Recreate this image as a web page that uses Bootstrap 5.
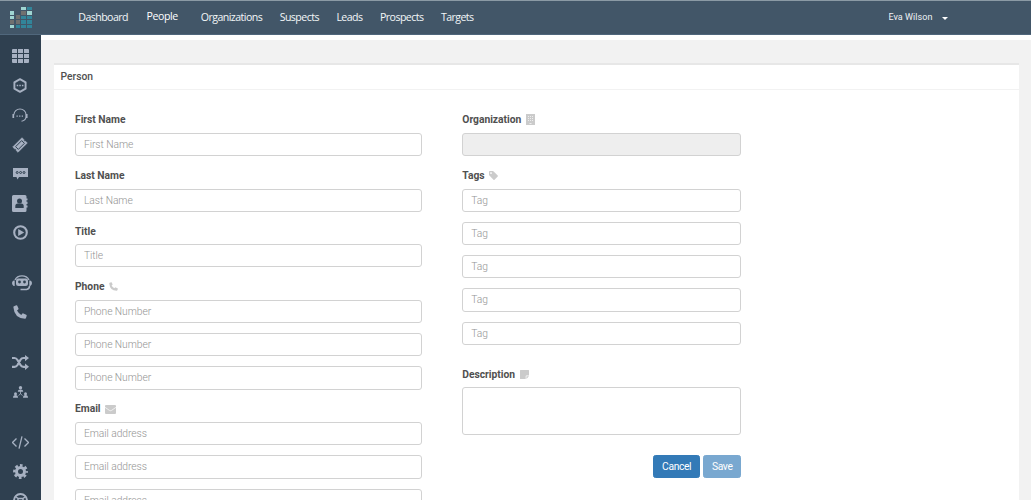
<!DOCTYPE html>
<html lang="en">
<head>
<meta charset="utf-8">
<meta name="viewport" content="width=device-width, initial-scale=1">
<title>Person</title>
<link href="https://cdn.jsdelivr.net/npm/bootstrap@5.3.0/dist/css/bootstrap.min.css" rel="stylesheet">
<style>
body{font-family:Roboto,"Liberation Sans",sans-serif;font-size:10.3px;background:#f2f2f2;color:#505050;height:100vh;overflow:hidden}
.topbar{height:35px;background:#425668;border-top:1px solid #8b9aa5;border-bottom:1px solid #50677c;padding:0}
.brand-box{width:41px;padding:1px 0 0 9.5px}
.main-nav{margin:-1px 0 0 37.3px;gap:17.5px;font:10.6px/16px "Open Sans",sans-serif;letter-spacing:-.56px}
.main-nav .nav-link{padding:0;color:#f3f6f8}
.main-nav .active{margin:-1px 5.5px 0 1px;color:#fff;letter-spacing:-.4px}
.user-menu{margin-right:83px;font-family:Roboto,sans-serif;font-size:9px;letter-spacing:.05px;color:#eef2f5;gap:9.5px;padding-top:1px}
.caret{border:3px solid transparent;border-top-color:#fff;border-bottom:0}
.side{width:41px;background:#2f4050;padding:6.500px 1px 0 0;color:#a7b1c2;flex:none}
.side a{height:29.45px;color:inherit;flex:none}
.side .gap-before{margin-top:20.7px}
.stripe{height:5px;background:#fff}
.panel{margin:23px 12px 0 13px;border:0;border-top:2px solid #e7e7e7;border-radius:0;height:600px;color:inherit}
.panel .card-header{height:25px;background:#fff;border-bottom:1px solid #f2f2f2;padding:0 6.5px;line-height:23.4px;font-weight:500;font-size:10.3px;color:inherit}
.panel .card-body{padding:20.55px 0 0 21px}
.col-left{width:346.5px}
.col-right{width:279px;margin-left:40.8px}
.form-label{display:flex;align-items:center;height:18.8px;margin:0 0 3.6px;font-weight:700;gap:5px;letter-spacing:-.02px}
.form-label svg{color:#cbcbcb;margin-left:-.5px}
.form-control{height:23.25px;margin-bottom:10px;padding:0 8px;border:1px solid #d2d2d2;border-radius:3px;font-size:10.3px;font-weight:300;color:#555;letter-spacing:-.07px}
.form-control::placeholder{color:#949494;opacity:1}
.form-control:disabled{background:#eee}
textarea.form-control{height:48px;resize:none;margin-bottom:20px}
.desc{padding-top:10px}
.actions{gap:3px}
.btn{height:23px;padding:0 7.8px;border-radius:2.5px;font-size:10.3px;line-height:21px;letter-spacing:-.35px;--bs-btn-bg:#337ab7;--bs-btn-border-color:#337ab7;--bs-btn-disabled-bg:#337ab7;--bs-btn-disabled-border-color:#337ab7}
</style>
<script src="https://cdn.jsdelivr.net/npm/bootstrap@5.3.0/dist/js/bootstrap.bundle.min.js"></script>
</head>
<body class="d-flex flex-column">
<header class="topbar d-flex align-items-center flex-shrink-0">
 <a class="brand-box d-flex" href="#" aria-label="Home">
  <svg width="22" height="22" viewBox="0 0 22 22">
   <g fill="#9fd5d2"><path d="M11 0h5v3h-5zM17 4h5v4h-5zM0 4h4v4H0zM0 9h4v3H0zM0 18h4v3H0z"/></g>
   <g fill="#32859a"><path d="M17 0h5v3h-5zM11 9h5v3h-5zM17 9h5v3h-5zM17 13h5v4h-5zM11 18h5v3h-5zM17 18h5v3h-5zM11 13h5v4h-5zM6 18h4v3H6z"/></g>
   <g fill="#70706f"><path d="M11 4h5v4h-5zM6 8h4v4H6zM0 13h4v4H0zM6 13h4v4H6z"/></g>
  </svg>
 </a>
 <nav class="nav main-nav flex-nowrap">
  <a class="nav-link" href="#">Dashboard</a><a class="nav-link active" href="#">People</a><a class="nav-link" href="#">Organizations</a><a class="nav-link" href="#">Suspects</a><a class="nav-link" href="#">Leads</a><a class="nav-link" href="#">Prospects</a><a class="nav-link" href="#">Targets</a>
 </nav>
 <div class="user-menu d-flex align-items-center ms-auto"><span>Eva Wilson</span><span class="caret"></span></div>
</header>
<div class="d-flex flex-grow-1 overflow-hidden">
 <nav class="side d-flex flex-column">
  <a class="d-flex align-items-center justify-content-center" href="#"><svg width="17" height="14" viewBox="0 0 17 14" fill="currentColor"><path d="M0 1q0-1 1-1h4v4H0zM6 0h5v4H6zM12 0h4q1 0 1 1v3h-5zM0 5h5v4H0zM6 5h5v4H6zM12 5h5v4h-5zM0 10h5v4H1q-1 0-1-1zM6 10h5v4H6zM12 10h5v3q0 1-1 1h-4z"/></svg></a>
  <a class="d-flex align-items-center justify-content-center" href="#"><svg width="14" height="15" viewBox="0 0 14 15"><path d="M7 1.200 12.600 4.300v6.400L7 13.800 1.400 10.700V4.300z" fill="none" stroke="currentColor" stroke-width="1.900" stroke-linejoin="round"/><path d="M3.700 6.800h1.500v1.400H3.700zM6.300 6.800h1.500v1.400H6.300zM8.900 6.800h1.500v1.400H8.900z" fill="currentColor"/></svg></a>
  <a class="d-flex align-items-center justify-content-center" href="#"><svg width="16" height="15" viewBox="0 0 16 15" fill="none" stroke="currentColor"><path d="M2 6.500a6 5.500 0 0 1 12 0v2.300q0 3.500-4.500 4.500" stroke-width="1.100"/><path d="M1.300 6v4M14.700 6v4" stroke-width="1.700"/><path d="M4.500 8.200h1.300m1.300 0h1.300m1.300 0h1.300" stroke-width="1.200"/></svg></a>
  <a class="d-flex align-items-center justify-content-center" href="#"><svg width="16" height="16" viewBox="0 0 16 16"><path d="M10 .7 11.800 2.500a1.300 1.300 0 0 0 1.700 1.700L15.300 6 6 15.300 4.200 13.500a1.300 1.300 0 0 0-1.700-1.700L.700 10z" fill="currentColor" stroke="currentColor" stroke-width=".6"/><path d="M9.700 3.600 12.400 6.300 6.300 12.400 3.600 9.700z" fill="none" stroke="#2f4050" stroke-width="1"/></svg></a>
  <a class="d-flex align-items-center justify-content-center" href="#"><svg width="15" height="12" viewBox="0 0 15 12"><path d="M0 0h15v9H6l-1.500 2.500L3.500 9H0z" fill="currentColor"/><g fill="none" stroke="#2f4050"><circle cx="4.200" cy="4.500" r="1"/><circle cx="7.600" cy="4.500" r="1"/><circle cx="11" cy="4.500" r="1"/></g></svg></a>
  <a class="d-flex align-items-center justify-content-center" href="#"><svg width="16" height="17" viewBox="0 0 16 17"><path d="M1.500 0h11.500q1.500 0 1.500 1.500V3.500h1v1.800h-1v1.500h1v2.200h-1v1.500h1V12.500h-1v3q0 1.500-1.500 1.500H1.500Q0 17 0 15.500v-14Q0 0 1.500 0z" fill="currentColor"/><circle cx="7.500" cy="6" r="2.500" fill="#2f4050"/><path d="M3.300 13v-2q0-2.500 2.500-2.500h3.400q2.500 0 2.500 2.500v2z" fill="#2f4050"/></svg></a>
  <a class="d-flex align-items-center justify-content-center" href="#"><svg width="15" height="15" viewBox="0 0 15 15"><circle cx="7.500" cy="7.500" r="6.300" fill="none" stroke="currentColor" stroke-width="2.100"/><path d="m5.200 4 6 3.500-6 3.500z" fill="currentColor"/></svg></a>
  <a class="gap-before ps-1 d-flex align-items-center justify-content-center" href="#"><svg width="20" height="16" viewBox="0 0 20 16"><path d="M3 5Q5 .9 10 .9T17 5" fill="none" stroke="currentColor" stroke-width="1.300"/><path d="M1.700 5.500Q0 6 0 8t1.700 3h1V5.500zm16.600 0Q20 6 20 8t-1.700 3h-1V5.500z" fill="currentColor"/><path d="M6 3.500h8q2 0 2 2v3q0 2.500-2.500 2.500h-7Q4 11 4 8.500v-3q0-2 2-2z" fill="currentColor"/><path d="M17.500 11q0 3-3 3.500H8.500" fill="none" stroke="currentColor" stroke-width="1.500"/><circle cx="7.500" cy="7" r="1.400" fill="#2f4050"/><circle cx="12.500" cy="7" r="1.400" fill="#2f4050"/></svg></a>
  <a class="d-flex align-items-center justify-content-center" href="#"><svg width="14" height="14" viewBox="0 0 14 14" fill="currentColor"><path d="M1 1.200 3.300.3Q4 .1 4.300.8l1.200 2.800q.2.600-.3 1L4 5.600Q5.400 8.400 8.300 9.900l1.100-1.300q.4-.5 1-.2l2.800 1.300q.7.300.5 1l-.7 2.300q-.2.700-1 .7Q1.300 13.300.4 2.200.4 1.400 1 1.200z"/></svg></a>
  <a class="gap-before d-flex align-items-center justify-content-center" href="#"><svg width="17" height="15" viewBox="0 0 17 15"><path d="M0 3h2.500Q4.300 3 5.500 5l3 5q1 1.800 3 1.800h2M0 11.800h2.500q1.800 0 3-1.800l3-5.200Q9.500 3 11.500 3h2" fill="none" stroke="currentColor" stroke-width="2.200"/><path d="m13 0 4 3-4 3.300zM13 8.500l4 3.300-4 3.200z" fill="currentColor"/></svg></a>
  <a class="d-flex align-items-center justify-content-center" href="#"><svg width="15" height="12" viewBox="0 0 15 12" fill="currentColor"><circle cx="7.500" cy="1.800" r="1.700"/><path d="M4.800 5.700Q4.800 3.500 7.500 3.500t2.700 2.200z"/><circle cx="2.500" cy="7.700" r="1.500"/><path d="M0 11.800q0-2.700 2.500-2.700T5 11.800z"/><circle cx="12.500" cy="7.700" r="1.500"/><path d="M10 11.800q0-2.700 2.500-2.700t2.500 2.700z"/><path d="M7.500 5v3M5.500 9.500l2-1.700 2 1.700" fill="none" stroke="currentColor" stroke-width=".8"/></svg></a>
  <a class="gap-before d-flex align-items-center justify-content-center" href="#"><svg width="17" height="13" viewBox="0 0 17 13" fill="none" stroke="currentColor" stroke-width="1.300"><path d="m4.500 2.500-4 4 4 4M12.500 2.500l4 4-4 4M10 .3 7 12.700"/></svg></a>
  <a class="d-flex align-items-center justify-content-center" href="#"><svg width="15" height="15" viewBox="0 0 15 15"><circle cx="7.500" cy="7.500" r="4" fill="none" stroke="currentColor" stroke-width="3"/><circle cx="7.500" cy="7.500" r="6.200" fill="none" stroke="currentColor" stroke-width="2.400" stroke-dasharray="2.700 2.170" stroke-dashoffset="1.350"/></svg></a>
  <a class="d-flex align-items-center justify-content-center" href="#"><svg width="15" height="15" viewBox="0 0 15 15"><circle cx="7.500" cy="7.500" r="6.500" fill="none" stroke="currentColor" stroke-width="2"/><path d="m2.500 3.500 2.500 2h5l2.500-2M5 5.500v4h5v-4" stroke="currentColor" stroke-width="1.500" fill="none"/></svg></a>
 </nav>
 <main class="flex-grow-1">
  <div class="stripe"></div>
  <section class="card panel">
   <div class="card-header">Person</div>
   <form class="card-body d-flex align-items-start">
    <div class="col-left">
     <label class="form-label">First Name</label><input class="form-control" placeholder="First Name">
     <label class="form-label">Last Name</label><input class="form-control" placeholder="Last Name">
     <label class="form-label">Title</label><input class="form-control" placeholder="Title">
     <label class="form-label">Phone <svg width="9" height="9" viewBox="0 0 14 14" fill="currentColor"><path d="M1 1.200 3.300.3Q4 .1 4.300.8l1.200 2.800q.2.600-.3 1L4 5.600Q5.400 8.400 8.300 9.900l1.100-1.300q.4-.5 1-.2l2.800 1.300q.7.300.5 1l-.7 2.300q-.2.700-1 .7Q1.300 13.300.4 2.200.4 1.400 1 1.200z"/></svg></label>
     <input class="form-control" placeholder="Phone Number"><input class="form-control" placeholder="Phone Number"><input class="form-control" placeholder="Phone Number">
     <label class="form-label">Email <svg width="11" height="9" viewBox="0 0 11 9"><rect width="11" height="9" rx="1" fill="currentColor"/><path d="m0 2.300 4.300 3q1.200.8 2.400 0L11 2.300" fill="none" stroke="#fff" stroke-width=".7"/></svg></label>
     <input class="form-control" placeholder="Email address"><input class="form-control" placeholder="Email address"><input class="form-control" placeholder="Email address">
    </div>
    <div class="col-right">
     <label class="form-label">Organization <svg width="9" height="11" viewBox="0 0 9 11"><path d="M0 0h9v11H0z" fill="currentColor"/><path d="M2 2.500h1M4 2.500h1M6 2.500h1M2 4.500h1M4 4.500h1M6 4.500h1M2 6.500h1M4 6.500h1M6 6.500h1M3.500 9.500h2" stroke="#eee"/></svg></label><input class="form-control" disabled>
     <label class="form-label">Tags <svg width="9" height="9" viewBox="0 0 9 9"><path fill-rule="evenodd" d="M0 .8Q0 0 .8 0h3q.5 0 .9.400L8.700 4.400q.5.500 0 1L5.500 8.700q-.5.500-1 0L.400 4.600Q0 4.200 0 3.700zM2 1.200a.8.800 0 1 0 .01 0z" fill="currentColor"/></svg></label>
     <input class="form-control" placeholder="Tag"><input class="form-control" placeholder="Tag"><input class="form-control" placeholder="Tag"><input class="form-control" placeholder="Tag"><input class="form-control" placeholder="Tag">
     <div class="desc"><label class="form-label">Description <svg width="9" height="9" viewBox="0 0 9 9"><path d="M.5 0h8q.5 0 .5.500V5.500H6.500q-.8 0-.8.800V9H.5Q0 9 0 8.500v-8Q0 0 .5 0zM6.400 6.300H9L6.400 9z" fill="currentColor"/></svg></label>
     <textarea class="form-control"></textarea></div>
     <div class="actions d-flex justify-content-end"><button type="button" class="btn btn-primary">Cancel</button><button type="button" class="btn btn-primary" disabled>Save</button></div>
    </div>
   </form>
  </section>
 </main>
</div>
</body>
</html>
